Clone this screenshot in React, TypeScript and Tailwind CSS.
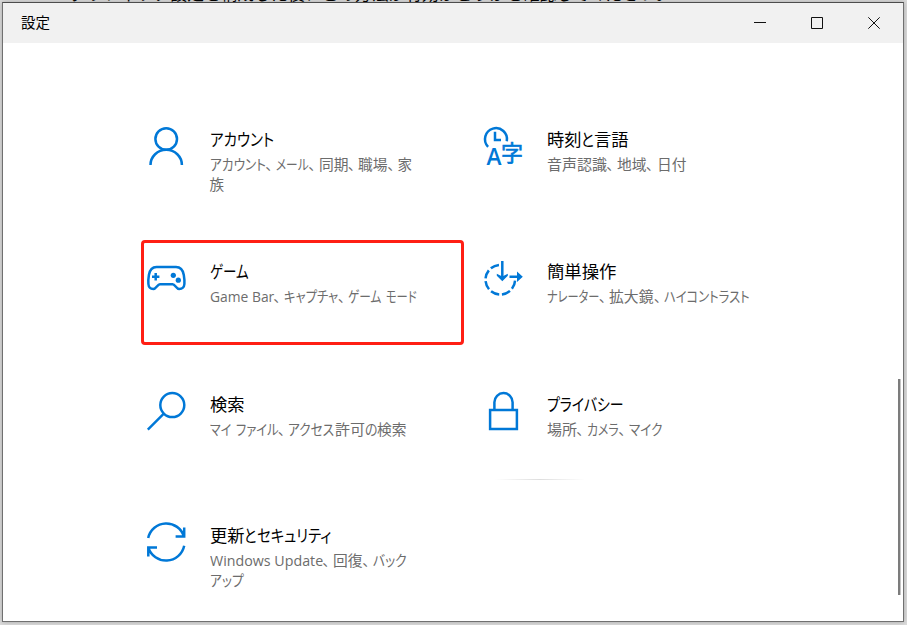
import { ReactNode, useLayoutEffect, useRef, useState } from "react";
import clsx from "clsx";

// A piece of text and the width it occupies
type Run = [text: string, width: number];

interface Category {
  id: string;
  icon: ReactNode;
  title: Run[];
  description: Run[][];
  highlighted?: boolean;
}

function FittedRun({ run: [text, width] }: { run: Run }) {
  const ref = useRef<HTMLSpanElement>(null);
  const [scale, setScale] = useState(1);

  useLayoutEffect(() => {
    if (ref.current && text !== "、") {
      setScale(width / ref.current.offsetWidth);
    }
  }, [text, width]);

  return (
    <span className="inline-block whitespace-pre" style={{ width }}>
      <span
        ref={ref}
        className="inline-block origin-left"
        style={{ transform: `scaleX(${scale})` }}
      >
        {text}
      </span>
    </span>
  );
}

function Line({ runs }: { runs: Run[] }) {
  return (
    <span className="flex">
      {runs.map((run, i) => (
        <FittedRun key={i} run={run} />
      ))}
    </span>
  );
}

function Icon({ children }: { children: ReactNode }) {
  return (
    <svg
      width="40"
      height="40"
      viewBox="0 0 40 40"
      fill="none"
      stroke="#0078d7"
      strokeWidth="2.5"
      className="shrink-0 overflow-visible"
    >
      {children}
    </svg>
  );
}

const AccountIcon = () => (
  <Icon>
    <circle cx="19.2" cy="12" r="10.8" />
    <path d="M3.5 38 A15.7 15.2 0 0 1 34.9 38" />
  </Icon>
);

const LanguageIcon = () => (
  <Icon>
    <path d="M4.1 19.8 A11 11 0 1 1 22.8 14.2" />
    <path d="M11 4.8 V13 H17" />
    <g fill="#0078d7" stroke="none">
      <text
        x="2.6"
        y="38"
        fontSize="23"
        fontWeight="600"
        textLength="15"
        lengthAdjust="spacingAndGlyphs"
        fontFamily="Open Sans, Noto Sans, sans-serif"
      >
        A
      </text>
      <text
        x="16.9"
        y="33.8"
        fontSize="22"
        fontWeight="400"
        stroke="#0078d7"
        strokeWidth="0.6"
        fontFamily="Noto Sans CJK JP, sans-serif"
      >
        字
      </text>
    </g>
  </Icon>
);

const GameIcon = () => (
  <Icon>
    <path d="M9.5 8.1 H29 C34 8.1 36 11.5 36.8 16 C37.4 19.5 37.6 22.5 37.4 25 C37.1 28.5 34.8 30 32.2 30 C29.2 30 28.2 25.2 25.6 25.2 H12.9 C10.3 25.2 9.3 30 6.3 30 C3.7 30 1.7 28.5 1.4 25 C1.2 22.5 1.3 19.5 1.9 16 C2.7 11.5 4.7 8.1 9.5 8.1 Z" />
    <path d="M8.7 14 V21.4 M5 17.7 H12.4" />
    <g fill="#0078d7" stroke="none">
      <circle cx="26.3" cy="16.3" r="2.6" />
      <circle cx="31.3" cy="21.2" r="2.6" />
    </g>
  </Icon>
);

const EaseIcon = () => (
  <Icon>
    <path
      d="M16.3 5.9 A14.8 14.8 0 1 0 31.1 20.7"
      strokeDasharray="8.8 2.82"
      strokeDashoffset="-1.4"
    />
    <path d="M18.3 2 V19 M25.5 17.7 H36" />
    <path
      d="M12.8 14.8 L18.3 17.6 L23.8 14.8 V16.8 L18.3 22.2 L12.8 16.8 Z M33 12.4 L38.8 17.7 L33 23 Z"
      fill="#0078d7"
      stroke="none"
    />
  </Icon>
);

const SearchIcon = () => (
  <Icon>
    <circle cx="25.3" cy="13.1" r="12" />
    <path d="M16.8 21.6 L0.8 37.6" />
  </Icon>
);

const LockIcon = () => (
  <Icon>
    <path d="M6.1 18 H32.9 V37.1 H6.1 Z" />
    <path d="M10.4 18 V10.2 A9.1 9.1 0 0 1 28.6 10.2 V18" />
  </Icon>
);

const UpdateIcon = () => (
  <Icon>
    <path d="M1.2 15 A18.5 18.5 0 0 1 37 13.6 M37.2 4.4 V13.4 H28.6" />
    <path d="M37.2 22.8 A18.5 18.5 0 0 1 1.4 24.6 M1.3 33.6 V24.6 H10" />
  </Icon>
);

const categories: Category[] = [
  {
    id: "account",
    icon: <AccountIcon />,
    title: [["アカウント", 64]],
    description: [
      [
        ["アカウント", 56],
        ["、", 10],
        ["メール", 33],
        ["、", 10],
        ["同期", 29.5],
        ["、", 10],
        ["職場", 29.5],
        ["、", 10],
        ["家", 15],
      ],
      [["族", 15]],
    ],
  },
  {
    id: "language",
    icon: <LanguageIcon />,
    title: [
      ["時刻", 34.5],
      ["と", 13],
      ["言語", 34.5],
    ],
    description: [
      [
        ["音声認識", 60],
        ["、", 10],
        ["地域", 29.5],
        ["、", 10.5],
        ["日付", 29.5],
      ],
    ],
  },
  {
    id: "game",
    icon: <GameIcon />,
    title: [["ゲーム", 39]],
    description: [
      [
        ["Game Bar", 64],
        ["、", 10],
        ["キャプチャ", 54.5],
        ["、", 10],
        ["ゲーム", 33],
        [" ", 5],
        ["モード", 31],
      ],
    ],
    highlighted: true,
  },
  {
    id: "ease",
    icon: <EaseIcon />,
    title: [["簡単操作", 69.5]],
    description: [
      [
        ["ナレーター", 52.5],
        ["、", 10],
        ["拡大鏡", 45],
        ["、", 10],
        ["ハイコントラスト", 86],
      ],
    ],
  },
  {
    id: "search",
    icon: <SearchIcon />,
    title: [["検索", 34.5]],
    description: [
      [
        ["マイ", 21.5],
        [" ", 4.5],
        ["ファイル", 42.5],
        ["、", 10],
        ["アクセス", 46.5],
        ["許可", 30],
        ["の", 12.5],
        ["検索", 29.5],
      ],
    ],
  },
  {
    id: "privacy",
    icon: <LockIcon />,
    title: [["プライバシー", 77]],
    description: [
      [
        ["場所", 30],
        ["、", 10],
        ["カメラ", 32],
        ["、", 10],
        ["マイク", 33],
      ],
    ],
  },
  {
    id: "update",
    icon: <UpdateIcon />,
    title: [
      ["更新", 34.5],
      ["と", 12.5],
      ["セキュリティ", 74.5],
    ],
    description: [
      [
        ["Windows Update", 113],
        ["、", 10.5],
        ["回復", 29.5],
        ["、", 10],
        ["バック", 33.5],
      ],
      [["アップ", 33.5]],
    ],
  },
];

function CategoryTile({ category }: { category: Category }) {
  return (
    <button
      className={clsx(
        "flex h-[105px] items-start rounded-[4px] border-3 pt-4 pl-[3px] text-left",
        category.highlighted ? "border-[#ff1f14]" : "border-transparent"
      )}
    >
      {category.icon}
      <span className="ml-[22.5px] block">
        <span className="block text-[17px] leading-[26px] text-black">
          <Line runs={category.title} />
        </span>
        <span className="block pt-0.5 text-[14.5px] leading-5 text-[#6c6c6c]">
          {category.description.map((runs, i) => (
            <Line key={i} runs={runs} />
          ))}
        </span>
      </span>
    </button>
  );
}

function TitleBar() {
  return (
    <header className="flex h-10 items-center bg-[#f1f1f1] pl-[18px]">
      <h1 className="text-[14.5px] text-black">設定</h1>
      <div className="ml-auto flex">
        <button className="flex h-10 w-[57px] items-center justify-center">
          <svg width="13" height="13" stroke="#111" fill="none">
            <path d="M0 5.5 H12" />
          </svg>
        </button>
        <button className="flex h-10 w-[57px] items-center justify-center">
          <svg width="13" height="13" stroke="#111" fill="none">
            <path d="M.5 .5 H11.5 V11.5 H.5 Z" />
          </svg>
        </button>
        <button className="flex h-10 w-[57px] items-center justify-center">
          <svg width="13" height="13" stroke="#111" fill="none">
            <path d="M.3 .3 L11.7 11.7 M11.7 .3 L.3 11.7" />
          </svg>
        </button>
      </div>
    </header>
  );
}

export default function App() {
  return (
    <div className="h-[625px] w-[907px] overflow-hidden bg-[#dcdcdc] font-['Open_Sans','Noto_Sans_CJK_JP',sans-serif] [font-feature-settings:'palt']">
      {/* Page behind the window */}
      <div className="flex h-[2px] items-end overflow-hidden pl-[70px] font-['Liberation_Serif','Noto_Sans_CJK_JP',serif] text-[16.8px] leading-[20px] whitespace-nowrap text-black [font-feature-settings:normal]">
        <span className="mb-[-3px]">
          グラフィック設定を構成した後、この方法が有効かどうかを確認してください。
        </span>
      </div>

      <main className="relative ml-[2px] h-[620px] w-[902px] border border-[#707070] border-t-[#4c4c4c] bg-white shadow-[0_0_5px_rgba(0,0,0,0.25)]">
        <TitleBar />

        <div className="grid grid-cols-[323px_323px] grid-rows-[132px_133px_131px_105px] gap-x-[14px] pt-[65px] pl-[138px]">
          {categories.map((category) => (
            <CategoryTile key={category.id} category={category} />
          ))}
        </div>

        {/* Tile edge glow */}
        <div className="absolute top-[476px] left-[492px] h-px w-[90px] bg-linear-to-r from-transparent via-[#dedede] to-transparent" />

        {/* Scrollbar */}
        <div className="absolute top-[376px] right-[2px] h-[216px] w-[3px] border-r border-[#c4c4c4] bg-[#7c7c7c]" />
      </main>
    </div>
  );
}
